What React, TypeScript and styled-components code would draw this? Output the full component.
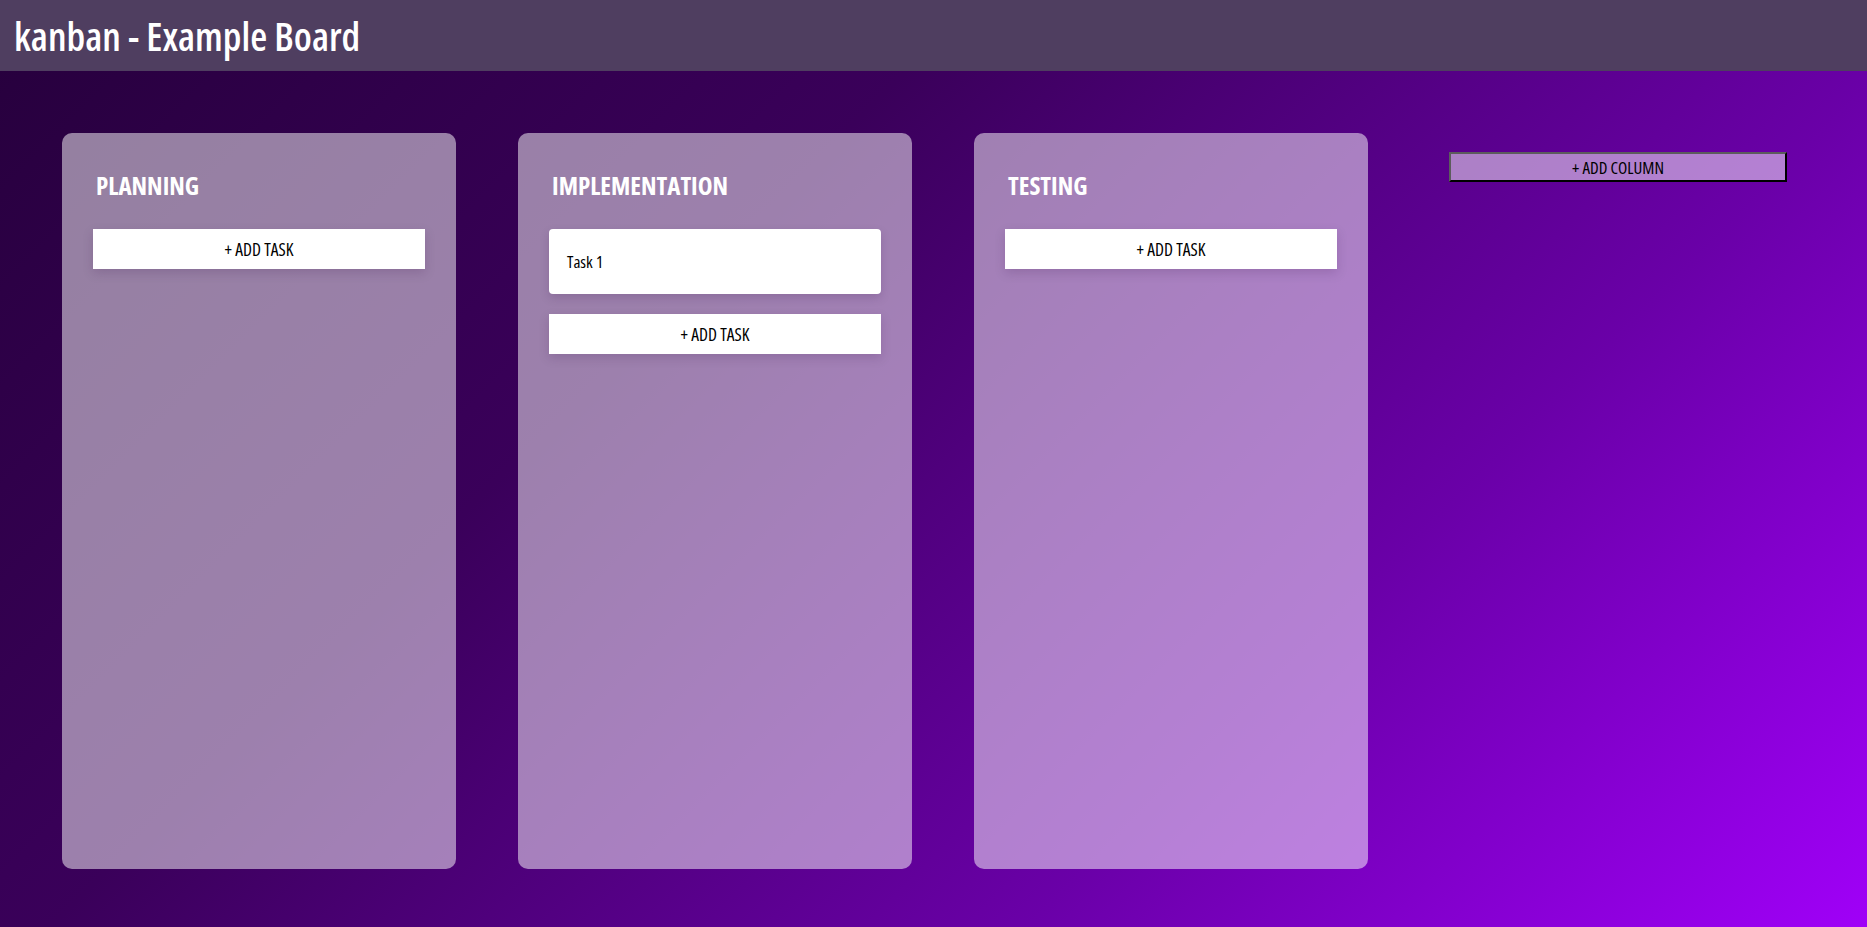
import React from "react";
import styled, { createGlobalStyle } from "styled-components";

const GlobalStyle = createGlobalStyle`
  html, body {
    margin: 0;
    padding: 0;
  }
  body {
    font-family: "Open Sans", "Liberation Sans", sans-serif;
    font-stretch: 75%;
    background: linear-gradient(135deg, #26003c 0%, #3a005a 35%, #6a00a8 70%, #a000f8 100%);
    min-height: 100vh;
    overflow: hidden;
  }
  * { box-sizing: border-box; }
`;

const Page = styled.div`
  display: flex;
  flex-direction: column;
  height: 100vh;
`;

const Header = styled.header`
  flex: 0 0 71px;
  display: flex;
  align-items: center;
  padding: 0 14px;
  background: #4f3e60;
`;

const Title = styled.h1`
  margin: 0;
  font-size: 39px;
  line-height: 71px;
  font-weight: 600;
  color: #ffffff;
  font-stretch: 75%;
`;

const Board = styled.main`
  flex: 1 1 auto;
  display: flex;
  align-items: stretch;
  gap: 62px;
  padding: 62px 62px 58px;
`;

const Column = styled.section`
  flex: 0 0 394px;
  display: flex;
  flex-direction: column;
  padding: 31px;
  border-radius: 10px;
  background: rgba(255, 255, 255, 0.5);
`;

const ColumnTitle = styled.h2`
  margin: 6px 0 29px 3px;
  font-size: 25px;
  line-height: 30px;
  font-weight: 700;
  color: #ffffff;
  text-transform: uppercase;
  font-stretch: 75%;
`;

const TaskCard = styled.div`
  display: flex;
  align-items: center;
  height: 65px;
  margin-bottom: 20px;
  padding: 0 18px;
  border-radius: 4px;
  background: #ffffff;
  color: #000000;
  font-size: 17px;
  font-weight: 500;
  box-shadow: 0 4px 10px rgba(60, 20, 80, 0.18);
  font-stretch: 75%;
`;

const AddTaskButton = styled.button`
  height: 40px;
  width: 100%;
  border: none;
  background: #ffffff;
  color: #000000;
  font-family: inherit;
  font-size: 17.5px;
  font-weight: 500;
  text-transform: uppercase;
  cursor: pointer;
  box-shadow: 0 4px 10px rgba(60, 20, 80, 0.18);
  font-stretch: 75%;
`;

const AddColumnWrap = styled.div`
  margin-left: 19px;
  padding-top: 19px;
`;

const AddColumnButton = styled.button`
  width: 338px;
  height: 30px;
  border-width: 2px;
  border-style: solid;
  border-color: #5c5c5c #000000 #000000 #5c5c5c;
  background: rgba(255, 255, 255, 0.5);
  color: #000000;
  font-family: inherit;
  font-size: 17px;
  font-weight: 500;
  text-transform: uppercase;
  cursor: pointer;
  font-stretch: 75%;
`;

type ColumnData = { title: string; tasks: string[] };

const columns: ColumnData[] = [
  { title: "Planning", tasks: [] },
  { title: "Implementation", tasks: ["Task 1"] },
  { title: "Testing", tasks: [] },
];

export default function App() {
  return (
    <>
      <GlobalStyle />
      <Page>
        <Header>
          <Title>kanban - Example Board</Title>
        </Header>
        <Board>
          {columns.map((col) => (
            <Column key={col.title}>
              <ColumnTitle>{col.title}</ColumnTitle>
              {col.tasks.map((t) => (
                <TaskCard key={t}>{t}</TaskCard>
              ))}
              <AddTaskButton>+ Add Task</AddTaskButton>
            </Column>
          ))}
          <AddColumnWrap>
            <AddColumnButton>+ Add Column</AddColumnButton>
          </AddColumnWrap>
        </Board>
      </Page>
    </>
  );
}
